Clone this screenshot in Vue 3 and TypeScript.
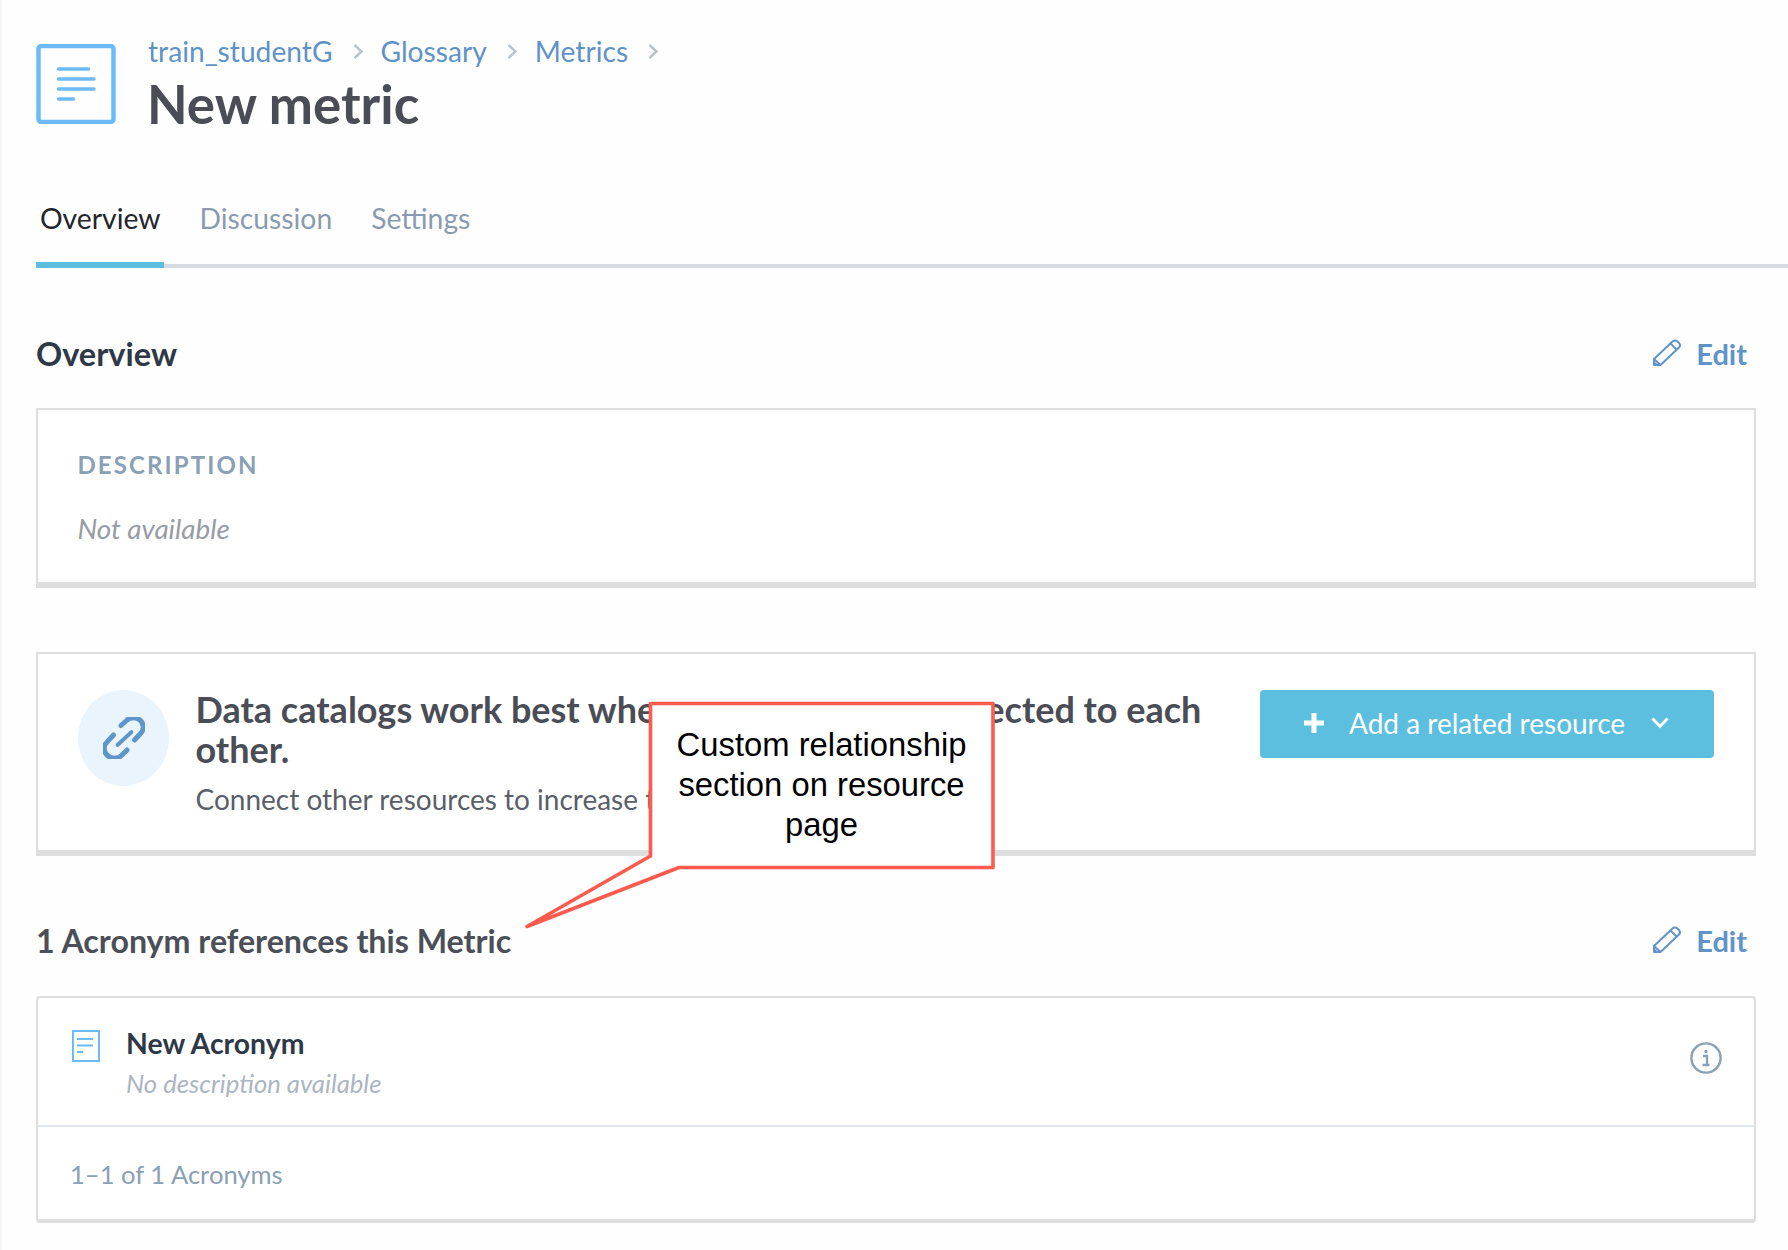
<script setup lang="ts">
const crumbs: string[] = ['train_studentG', 'Glossary', 'Metrics']
const tabs: string[] = ['Overview', 'Discussion', 'Settings']
</script>

<template>
  <div class="page">
    <header class="head">
      <svg class="doc" width="80" height="80" viewBox="0 0 80 80" fill="none">
        <rect x="2.5" y="2" width="75" height="76" rx="3" stroke="#6cbaf7" stroke-width="4.5" />
        <g stroke="#6cbaf7" stroke-width="3.5" stroke-linecap="round">
          <path d="M22.5 25H52.5" />
          <path d="M22.5 35H58" />
          <path d="M22.5 45H58" />
          <path d="M22.5 55H37.5" />
        </g>
      </svg>
      <div class="head-text">
        <nav class="crumbs">
          <template v-for="c in crumbs" :key="c">
            <a class="crumb">{{ c }}</a>
            <svg class="chev" width="10" height="15" viewBox="0 0 10 15" fill="none">
              <path d="M1.5 1L8.5 7.5L1.5 14" stroke="#b9c3cd" stroke-width="2.4" />
            </svg>
          </template>
        </nav>
        <h1 class="title">New metric</h1>
      </div>
    </header>

    <div class="tabs">
      <div v-for="(t, i) in tabs" :key="t" class="tab" :class="{ active: i === 0 }">{{ t }}</div>
    </div>

    <section class="sec-head first">
      <h2 class="sec-title dark">Overview</h2>
      <a class="edit">
        <svg width="28" height="27" viewBox="0 0 28 27" fill="none" stroke="#6094c8" stroke-width="2">
          <path d="M1 26V20L19.5 2.5Q22 .5 24.5 2.5L26 4Q28 6.5 26 8.5L7.5 26Z" stroke-linejoin="round" />
          <path d="M17.5 4.5L23.5 10.5" />
          <path d="M1 20L7.5 26" />
          <path d="M1 26V22L5 26Z" fill="#6094c8" stroke="none" />
        </svg>
        <span>Edit</span>
      </a>
    </section>

    <section class="card desc-card">
      <div class="label">DESCRIPTION</div>
      <div class="na">Not available</div>
    </section>

    <section class="card promo">
      <div class="avatar">
        <svg width="42" height="42" viewBox="0 0 42 42" fill="none" stroke="#5f95c9" stroke-width="5" stroke-linecap="round">
          <path d="M18 8.5L23.5 3.5A9.5 9 0 0 1 37.5 16.5L31.5 23" />
          <path d="M10.5 18L4.5 24.5A9.5 9 0 0 0 18.5 38.5L24 33" />
          <path d="M14.5 28L28.5 15" stroke-width="3.8" />
        </svg>
      </div>
      <div class="promo-text">
        <div class="promo-title">Data catalogs work best when resources are connected to each other.</div>
        <div class="promo-sub">Connect other resources to increase their visibility.</div>
      </div>
      <button class="add" type="button">
        <svg width="22" height="22" viewBox="0 0 22 22"><path d="M11 1V21M1 11H21" stroke="#fff" stroke-width="5" /></svg>
        <span class="add-label">Add a related resource</span>
        <svg width="18" height="12" viewBox="0 0 18 12" fill="none"><path d="M1.5 1.5L9 9.5L16.5 1.5" stroke="#fff" stroke-width="2.8" /></svg>
      </button>
    </section>

    <section class="sec-head second">
      <h2 class="sec-title">1 Acronym references this Metric</h2>
      <a class="edit">
        <svg width="28" height="27" viewBox="0 0 28 27" fill="none" stroke="#6094c8" stroke-width="2">
          <path d="M1 26V20L19.5 2.5Q22 .5 24.5 2.5L26 4Q28 6.5 26 8.5L7.5 26Z" stroke-linejoin="round" />
          <path d="M17.5 4.5L23.5 10.5" />
          <path d="M1 20L7.5 26" />
          <path d="M1 26V22L5 26Z" fill="#6094c8" stroke="none" />
        </svg>
        <span>Edit</span>
      </a>
    </section>

    <section class="card list">
      <div class="row">
        <svg class="row-doc" width="28" height="32" viewBox="0 0 28 32" fill="none">
          <rect x="1" y="1" width="26" height="30" stroke="#6cbaf7" stroke-width="2" />
          <path d="M5 9H21M5 15.5H21M5 22H11" stroke="#6cbaf7" stroke-width="1.8" />
        </svg>
        <div class="row-text">
          <div class="row-name">New Acronym</div>
          <div class="row-desc">No description available</div>
        </div>
        <svg class="info" width="32" height="32" viewBox="0 0 32 32" fill="none">
          <circle cx="16" cy="16" r="14.6" stroke="#8aa0b5" stroke-width="2.4" />
          <circle cx="16" cy="9.5" r="1.7" fill="#8aa0b5" />
          <path d="M13 14H17V22M12.5 23H19.5" stroke="#8aa0b5" stroke-width="2.4" />
        </svg>
      </div>
      <div class="foot">1–1 of 1 Acronyms</div>
    </section>

    <svg class="callout" width="490" height="240" viewBox="520 695 490 240" fill="none">
      <path
        d="M650.5 856V703.5H993V867.5H679L527 926.5Z"
        fill="#fff"
        stroke="#ff5a4e"
        stroke-width="3.6"
        stroke-linejoin="round"
      />
    </svg>
    <div class="callout-text">Custom relationship section on resource page</div>
  </div>
</template>

<style>
html,
body {
  margin: 0;
  background: #fff;
}
</style>

<style scoped>
.page {
  position: relative;
  box-sizing: border-box;
  width: 1788px;
  height: 1250px;
  padding: 33px 32px 0 36px;
  background: #fefefe;
  box-shadow: inset 2px 0 0 #f6f6f6;
  font-family: Lato, "Open Sans", sans-serif;
  overflow: hidden;
}
.head {
  display: flex;
  gap: 32px;
  align-items: flex-start;
}
.doc {
  margin-top: 11px;
  flex: none;
}
.crumbs {
  display: flex;
  align-items: center;
  height: 36px;
}
.crumb {
  font-size: 28.2px;
  line-height: 36px;
  color: #5f93c7;
}
.chev {
  margin: 0 18px 0 20px;
  flex: none;
}
.title {
  margin: 5px 0 0 -1px;
  font-size: 52.8px;
  line-height: 60px;
  font-weight: 700;
  color: #4a4d55;
}
.tabs {
  display: flex;
  gap: 31px;
  margin: 66px -32px 0 0;
  border-bottom: 4px solid #d5dbe2;
}
.tab {
  padding: 0 4px 26px;
  margin-bottom: -4px;
  font-size: 28.3px;
  line-height: 36px;
  color: #8a9bb0;
  border-bottom: 6px solid transparent;
}
.tab.active {
  color: #22262c;
  border-bottom-color: #5cbfdf;
}
.sec-head {
  display: flex;
  justify-content: space-between;
  align-items: center;
  padding-right: 9px;
  height: 40px;
}
.sec-head.first {
  margin-top: 66px;
  margin-bottom: 34px;
}
.sec-head.second {
  margin-top: 65px;
  margin-bottom: 35px;
}
.sec-title {
  margin: 0;
  font-size: 32.2px;
  line-height: 40px;
  font-weight: 700;
  color: #4a4f58;
}
.sec-title.dark {
  font-size: 32.5px;
  color: #2e3846;
}
.edit {
  display: flex;
  align-items: center;
  gap: 15px;
  font-size: 29px;
  line-height: 36px;
  font-weight: 700;
  color: #6094c8;
}
.edit svg {
  margin-top: -4px;
}
.card {
  box-sizing: border-box;
  background: #fff;
  border: 2px solid #dedede;
  border-bottom-width: 6px;
}
.desc-card {
  padding: 40px 36px 36px 39.5px;
  height: 180px;
}
.label {
  font-size: 24px;
  line-height: 30px;
  font-weight: 700;
  letter-spacing: 2.1px;
  color: #8aa0b5;
}
.na {
  margin-top: 31px;
  font-size: 27.8px;
  line-height: 36px;
  font-style: italic;
  color: #979ca5;
}
.promo {
  display: flex;
  align-items: flex-start;
  margin-top: 64px;
  padding: 36px 40px 32px;
  height: 204px;
}
.avatar {
  flex: none;
  display: flex;
  align-items: center;
  justify-content: center;
  width: 91px;
  height: 96px;
  border-radius: 50%;
  background: #e9f4fd;
}
.promo-text {
  flex: 1;
  min-width: 0;
  margin: -1px 40px 0 26.5px;
}
.promo-title {
  font-size: 36px;
  line-height: 40px;
  font-weight: 700;
  color: #4a4d55;
}
.promo-sub {
  margin-top: 12px;
  font-size: 28px;
  line-height: 36px;
  color: #5b5f68;
}
.add {
  flex: none;
  display: flex;
  align-items: center;
  box-sizing: border-box;
  width: 454px;
  height: 68px;
  padding: 0 0 2px 43px;
  border: 0;
  border-radius: 4px;
  background: #5cbfdf;
  font-family: inherit;
  font-size: 28px;
  color: #fff;
}
.add-label {
  margin: 0 26px 0 24px;
}
.list {
  height: 227px;
  border-bottom-width: 4px;
  border-radius: 4px;
}
.row {
  display: flex;
  align-items: flex-start;
  box-sizing: border-box;
  height: 129px;
  padding: 27px 32px 0 34px;
  border-bottom: 2px solid #dfe5ec;
}
.row-doc {
  flex: none;
  margin-top: 5px;
}
.row-text {
  flex: 1;
  margin-left: 26px;
}
.row-name {
  font-size: 28.4px;
  line-height: 36px;
  font-weight: 700;
  color: #2e3846;
}
.row-desc {
  margin-top: 5px;
  font-size: 25.7px;
  line-height: 34px;
  font-style: italic;
  color: #acb6c3;
}
.info {
  flex: none;
  margin-top: 17px;
}
.foot {
  padding: 30px 32px 26px;
  font-size: 25.6px;
  line-height: 34px;
  color: #8aa0b5;
}
.callout {
  position: absolute;
  left: 520px;
  top: 695px;
}
.callout-text {
  position: absolute;
  left: 650px;
  top: 725px;
  box-sizing: border-box;
  width: 343px;
  padding: 0 20px;
  font-family: "Liberation Sans", Arial, sans-serif;
  font-size: 32.8px;
  line-height: 40px;
  text-align: center;
  color: #000;
}
</style>
